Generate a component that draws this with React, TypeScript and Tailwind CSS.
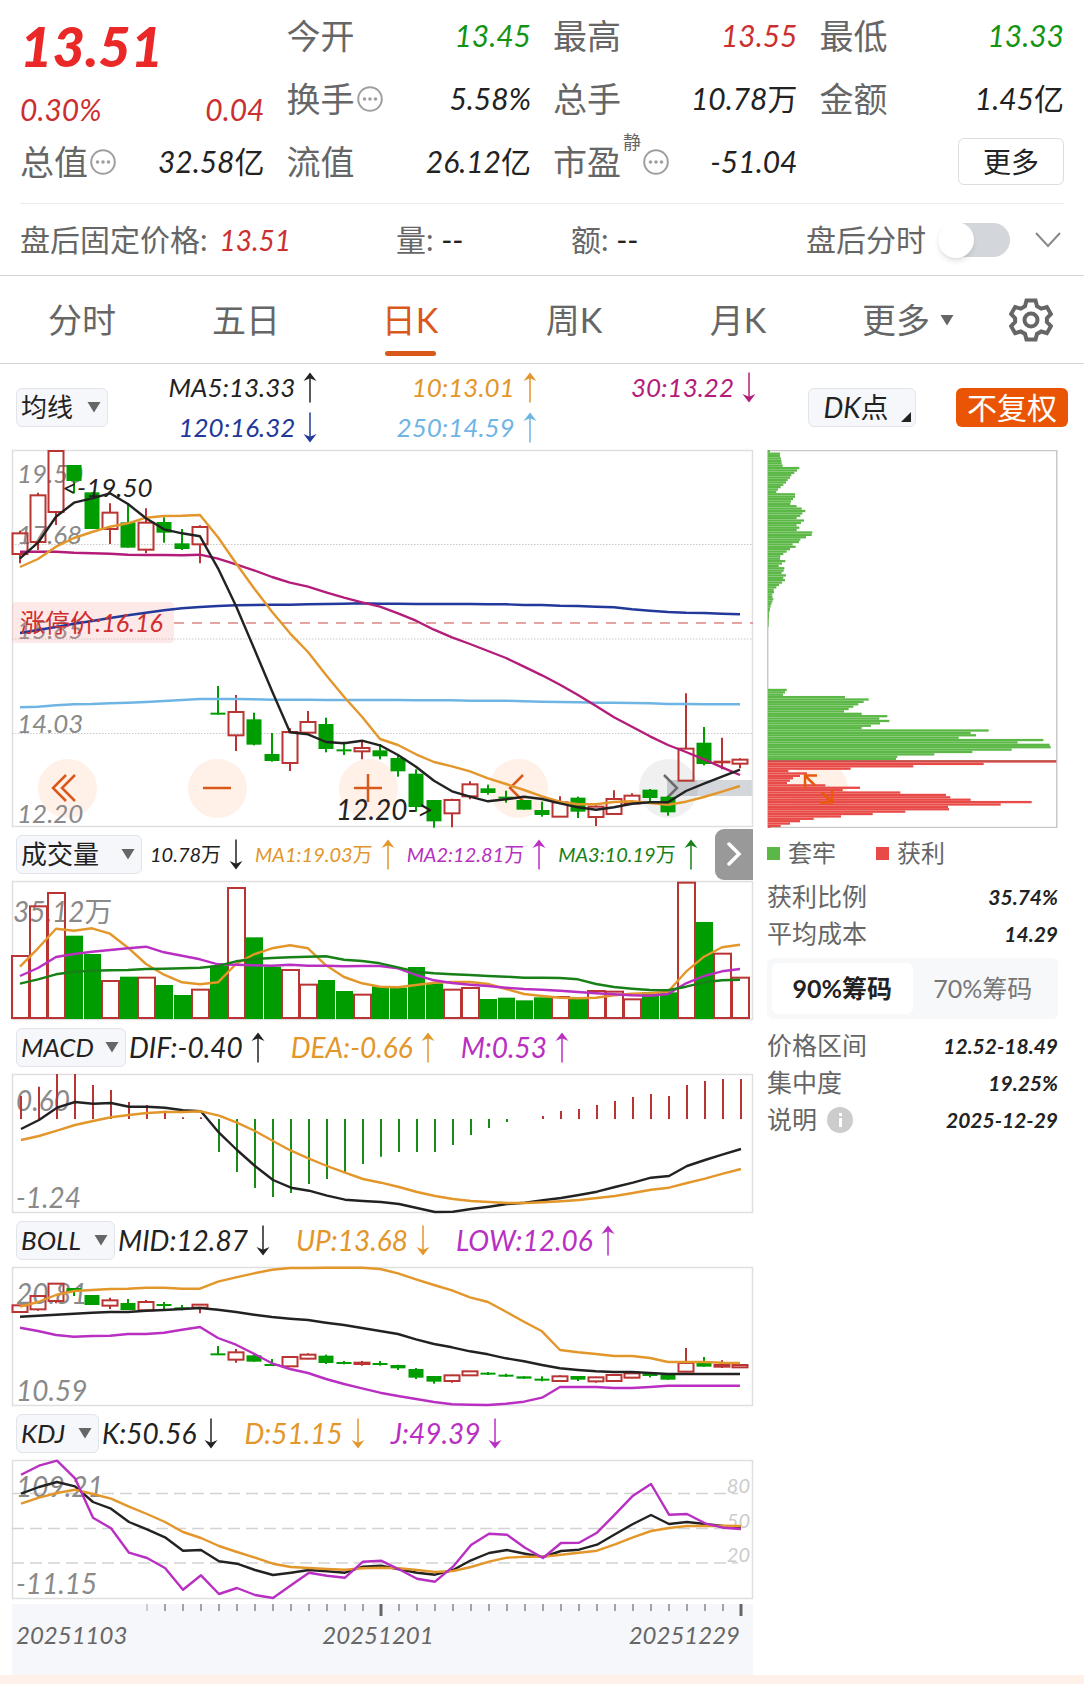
import { useState, type ReactNode } from 'react';
import clsx from 'clsx';

type Candle = [dir: 'r' | 'g', top: number, bottom: number, high?: number, low?: number];

const RED = '#b93432';
const GREEN = '#009d00';
const BLACK = '#222222';
const ORANGE = '#e3962a';
const PURPLE = '#b82fc2';

// Series are stored in thirds of a pixel, one value per trading day
const STEP = 18;
const dayX = (i: number) => 8 + i * STEP;

const candles: Candle[] = [
  ['r', 280, 342, 272, 370], ['r', 166, 306, 158, 330], ['r', 33, 216, 33, 255], ['g', 75, 123, 75, 160],
  ['g', 157, 267], ['r', 218, 267, 190, 312], ['g', 247, 323, 195, 323], ['r', 248, 329, 205, 340],
  ['g', 246, 278, 232, 308], ['g', 310, 327, 267, 330], ['r', 261, 313, 256, 370], ['g', 818, 824, 738, 824],
  ['r', 816, 886, 765, 933], ['g', 838, 914, 818, 916], ['g', 942, 963, 879, 965], ['r', 876, 969, 865, 993],
  ['r', 846, 878, 813, 880], ['g', 852, 927, 833, 937], ['g', 928, 934, 905, 945], ['r', 924, 934, 905, 958],
  ['g', 931, 949, 912, 958], ['g', 954, 994, 948, 1010], ['g', 1001, 1101, 988, 1115], ['g', 1080, 1144, 1080, 1163],
  ['r', 1080, 1120, 1076, 1162], ['r', 1033, 1069, 1024, 1078], ['g', 1045, 1059, 1034, 1064], ['g', 1070, 1074, 1052, 1088],
  ['g', 1080, 1109], ['g', 1110, 1125, 1085, 1130], ['r', 1087, 1130, 1069, 1132], ['g', 1073, 1115, 1070, 1134],
  ['r', 1100, 1131, 1096, 1158], ['r', 1077, 1122, 1051, 1124], ['r', 1067, 1090, 1060, 1092], ['g', 1049, 1074, 1047, 1085],
  ['g', 1070, 1117, 1068, 1127], ['r', 926, 1022, 760, 1024], ['g', 908, 972, 861, 976], ['r', 965, 967, 893, 988],
  ['r', 959, 971, 955, 985],
];

const ma5 = [355, 308, 230, 188, 175, 160, 192, 235, 268, 280, 289, 385, 498, 625, 753, 877, 883, 906, 910, 902, 916, 945, 980, 1022, 1054, 1070, 1084, 1078, 1070, 1077, 1090, 1102, 1109, 1102, 1091, 1087, 1087, 1053, 1031, 1010, 989];
const ma10 = [381, 357, 320, 294, 276, 260, 250, 233, 228, 227, 225, 292, 370, 445, 515, 580, 636, 705, 770, 830, 897, 915, 943, 966, 979, 994, 1015, 1032, 1050, 1069, 1085, 1093, 1093, 1086, 1084, 1089, 1094, 1085, 1071, 1055, 1038];
const ma30 = [335, 335, 335, 338, 340, 341, 344, 345, 345, 346, 344, 356, 373, 391, 411, 428, 440, 457, 473, 487, 500, 520, 542, 569, 592, 612, 633, 654, 680, 706, 734, 765, 798, 832, 860, 889, 915, 936, 958, 982, 1005];
const ma120 = [579, 570, 561, 551, 543, 534, 526, 518, 511, 505, 501, 498, 496, 495, 494, 494, 493, 492, 491, 490, 491, 491, 492, 492, 492, 492, 493, 493, 495, 495, 497, 498, 500, 502, 508, 512, 516, 518, 519, 521, 523];
const ma250 = [802, 800, 796, 793, 792, 790, 788, 786, 783, 780, 777, 777, 777, 778, 779, 779, 779, 780, 780, 780, 780, 780, 781, 781, 781, 782, 782, 782, 784, 785, 786, 787, 788, 788, 789, 790, 792, 792, 793, 793, 793];

const volumes = [405, 256, 216, 347, 402, 480, 470, 470, 495, 525, 506, 437, 201, 352, 440, 447, 491, 480, 513, 521, 499, 503, 441, 490, 506, 501, 537, 533, 541, 532, 528, 535, 510, 512, 535, 517, 517, 185, 306, 398, 470];
const vol1 = [440, 385, 326, 332, 325, 341, 383, 432, 464, 487, 493, 487, 432, 403, 385, 376, 385, 436, 471, 490, 500, 502, 495, 488, 486, 486, 492, 507, 522, 528, 533, 535, 533, 526, 521, 520, 515, 455, 410, 382, 374];
const vol2 = [468, 444, 411, 402, 395, 390, 385, 380, 397, 407, 418, 433, 434, 436, 437, 434, 437, 437, 439, 438, 438, 445, 465, 481, 489, 494, 498, 503, 507, 509, 512, 516, 520, 523, 526, 527, 522, 490, 468, 454, 447];
const vol3 = [491, 478, 463, 455, 452, 451, 450, 447, 446, 445, 443, 438, 424, 417, 414, 412, 410, 409, 419, 423, 430, 442, 455, 460, 463, 465, 468, 470, 473, 473, 474, 478, 492, 501, 506, 510, 511, 500, 487, 481, 479];

const macdBars = [828, 800, 762, 762, 795, 810, 846, 855, 872, 892, 892, 996, 1056, 1104, 1131, 1119, 1092, 1077, 1056, 1032, 1010, 996, 996, 996, 975, 945, 924, 906, 897, 888, 873, 867, 855, 843, 831, 822, 828, 795, 783, 777, 777];
const dif = [927, 900, 863, 846, 851, 849, 860, 860, 863, 871, 874, 938, 990, 1038, 1080, 1103, 1112, 1127, 1139, 1143, 1146, 1152, 1164, 1176, 1175, 1167, 1160, 1152, 1148, 1141, 1134, 1125, 1115, 1101, 1088, 1073, 1068, 1038, 1020, 1003, 987];
const dea = [960, 948, 932, 915, 903, 892, 885, 879, 876, 876, 874, 887, 908, 933, 963, 992, 1016, 1038, 1058, 1077, 1088, 1101, 1116, 1128, 1137, 1143, 1146, 1149, 1149, 1147, 1144, 1140, 1134, 1128, 1119, 1109, 1103, 1089, 1076, 1061, 1047];

const bollCandles: Candle[] = [
  ['r', 286, 306], ['r', 258, 298, 255, 302], ['r', 221, 273, 221, 280], ['g', 234, 244, 234, 258], ['g', 255, 285],
  ['r', 271, 287, 263, 297], ['g', 279, 300, 267, 300], ['r', 276, 301, 270, 303], ['g', 282, 288, 276, 300], ['g', 292, 297, 285, 301],
  ['r', 284, 293, 284, 310], ['g', 430, 435, 408, 435], ['r', 427, 449, 417, 458], ['g', 436, 455, 431, 455], ['g', 462, 467, 447, 467],
  ['r', 441, 469], ['r', 434, 446, 430, 448], ['g', 437, 459, 434, 462], ['g', 456, 461, 453, 463], ['r', 458, 462, 453, 467],
  ['g', 459, 464, 453, 467], ['g', 465, 475, 464, 480], ['g', 477, 503, 474, 507], ['g', 498, 515, 498, 521], ['r', 496, 513, 494, 518],
  ['r', 484, 496], ['g', 488, 492, 486, 495], ['g', 494, 498, 491, 501], ['g', 499, 506], ['g', 506, 510, 499, 514],
  ['r', 499, 513, 496, 514], ['g', 498, 509, 498, 513], ['r', 502, 514, 500, 518], ['r', 495, 513, 492, 514], ['r', 490, 503],
  ['g', 492, 498, 489, 502], ['g', 494, 509], ['r', 459, 485, 414, 487], ['g', 454, 470, 441, 470], ['r', 465, 470, 451, 474],
  ['r', 465, 472],
];
const bollUp = [290, 276, 255, 243, 240, 237, 236, 233, 233, 236, 236, 215, 202, 190, 179, 174, 174, 173, 173, 173, 177, 190, 208, 225, 241, 262, 276, 305, 335, 364, 420, 427, 432, 438, 438, 444, 456, 456, 456, 458, 459];
const bollMid = [320, 317, 314, 311, 308, 306, 306, 302, 300, 297, 294, 299, 306, 314, 321, 326, 330, 338, 345, 354, 363, 372, 388, 402, 412, 424, 433, 445, 454, 465, 475, 480, 484, 486, 486, 489, 492, 492, 492, 492, 492];
const bollLow = [353, 363, 375, 380, 378, 377, 372, 372, 368, 359, 351, 384, 404, 431, 460, 477, 489, 507, 522, 535, 548, 558, 567, 576, 583, 584, 585, 581, 575, 563, 531, 531, 531, 534, 534, 531, 527, 527, 527, 527, 527];

const kLine = [851, 831, 816, 829, 876, 896, 936, 958, 982, 1022, 1020, 1054, 1061, 1080, 1095, 1088, 1080, 1084, 1088, 1070, 1067, 1078, 1088, 1094, 1080, 1051, 1029, 1020, 1031, 1041, 1023, 1019, 1004, 973, 942, 915, 942, 936, 942, 948, 951];
const dLine = [881, 863, 849, 839, 852, 866, 890, 912, 936, 966, 984, 1008, 1026, 1043, 1061, 1071, 1074, 1077, 1079, 1075, 1073, 1075, 1080, 1086, 1083, 1071, 1055, 1043, 1040, 1040, 1034, 1028, 1022, 1003, 982, 963, 954, 948, 948, 947, 948];
const jLine = [794, 767, 752, 805, 923, 955, 1028, 1044, 1074, 1139, 1096, 1152, 1134, 1155, 1164, 1126, 1088, 1097, 1103, 1055, 1052, 1078, 1106, 1115, 1070, 1005, 971, 974, 1013, 1044, 999, 998, 968, 913, 857, 822, 914, 912, 940, 953, 957];

// Chip distribution, top price to bottom price
const upperChips = [
  6, 36, 36, 39, 40, 41, 44, 94, 87, 79, 70, 66, 59, 54, 46, 38, 30, 25, 81, 81, 75, 69, 67, 86, 101, 112, 103, 97, 86, 108,
  99, 86, 94, 86, 133, 131, 114, 97, 93, 74, 83, 66, 56, 46, 37, 36, 52, 42, 32, 49, 47, 41, 54, 46, 51, 42, 33, 25, 17, 18,
  13, 13, 16, 13, 10, 8, 6, 5, 3, 3, 3, 2, 2, 2,
];
const lowerChips = [
  56, 51, 45, 231, 302, 287, 271, 256, 242, 228, 281, 358, 334, 364, 336, 309, 281, 662, 608, 624, 572, 826, 749, 845, 848, 731, 613, 499, 388, 384,
  865, 647, 436, 248, 61, 117, 96, 75, 66, 57, 172, 276, 224, 397, 534, 547, 608, 791, 698, 540, 543, 412, 314, 219, 137, 96, 66, 38, 8,
];
const chips = [
  ...upperChips.map((w, i) => ({ row: i, w, profit: false })),
  ...lowerChips.map((w, i) => ({ row: 100 + i, w, profit: i >= 30 })),
];

function Arrow({ down = false }: { down?: boolean }) {
  return (
    <svg width="14" height="31" viewBox="0 0 14 31" fill="none" stroke="currentColor" className={clsx('shrink-0', down && 'rotate-180')}>
      <path d="M7 30.5V2" strokeWidth="1.5" />
      <path d="M7 0.5 0.5 9 7 6.2 13.5 9Z" fill="currentColor" stroke="none" />
    </svg>
  );
}

function Triangle({ className }: { className?: string }) {
  return (
    <svg width="14" height="12" viewBox="0 0 14 12" fill="#666666" className={className}>
      <path d="M0.5 1h13L7 11.500Z" />
    </svg>
  );
}

function MoreDots() {
  return (
    <svg width="26" height="26" viewBox="0 0 26 26" fill="none" stroke="#9f9f9f" strokeWidth="2">
      <circle cx="13" cy="13" r="11.8" />
      <g fill="#9f9f9f" stroke="none">
        <circle cx="7.500" cy="13" r="1.800" />
        <circle cx="13" cy="13" r="1.800" />
        <circle cx="18.500" cy="13" r="1.800" />
      </g>
    </svg>
  );
}

function Gear() {
  return (
    <svg width="44" height="44" viewBox="0 0 44 44" fill="none" stroke="#666666" strokeWidth="4">
      <path d="M17.500 2.500h9l1.500 5.800 4.200 2.400 5.700-1.700 4 7-4 4.200v3.800l4 4.200-4 7-5.700-1.700-4.200 2.400-1.500 5.600h-9L16 35.900l-4.200-2.400-5.700 1.700-4-7 4-4.200v-3.800l-4-4.200 4-7 5.700 1.700L16 8.300Z" />
      <circle cx="22" cy="22" r="6.500" />
    </svg>
  );
}

function Stat({ label, value, color = 'text-[#222]', info, sup }: { label: string; value: string; color?: string; info?: boolean; sup?: string }) {
  return (
    <div className="flex h-[63px] items-center justify-between">
      <div className="flex items-center gap-0.5 text-[34px] text-[#666]">
        <span>{label}</span>
        {sup && <sup className="top-[-20px] text-[18px] leading-none">{sup}</sup>}
        {info && (
          <button type="button" aria-label={label + '说明'}>
            <MoreDots />
          </button>
        )}
      </div>
      <span className={clsx('text-[30px] italic', color)}>{value}</span>
    </div>
  );
}

function Picker({ value, width, name }: { value: string; width: string; name: string }) {
  return (
    <div className={clsx('relative h-[39px] shrink-0', width)}>
      <select
        aria-label={name}
        defaultValue={value}
        className="block h-full w-full appearance-none rounded-md border border-[#e1e4e9] bg-[#f6f7fa] pl-1 text-[26px] leading-none text-[#222] italic"
      >
        <option>{value}</option>
      </select>
      <Triangle className="pointer-events-none absolute top-[13px] right-[7px]" />
    </div>
  );
}

function Legend({ text, color, down }: { text: string; color: string; down?: boolean }) {
  return (
    <span className={clsx('flex items-center gap-2 whitespace-nowrap', color)}>
      {text}
      <Arrow down={down} />
    </span>
  );
}

function Line({ data, top, color, dx = 0 }: { data: number[]; top: number; color: string; dx?: number }) {
  return (
    <polyline
      points={data.map((v, i) => `${dayX(i) + dx},${((v - top) / 3).toFixed(1)}`).join(' ')}
      fill="none"
      stroke={color}
      strokeWidth="2.400"
      strokeLinejoin="round"
    />
  );
}

function Candles({ data, top }: { data: Candle[]; top: number }) {
  return (
    <>
      {data.map(([dir, a, b, high = a, low = b], i) => {
        const y = (v: number) => (v - top) / 3;
        const x = dayX(i);
        const h = (b - a) / 3;
        if (dir === 'g') {
          return (
            <g key={i} fill={GREEN}>
              <rect x={x - 1} y={y(high)} width="2" height={(low - high) / 3} />
              <rect x={x - 7.5} y={y(a)} width="15" height={Math.max(h, 2)} />
            </g>
          );
        }
        return (
          <g key={i} stroke={RED} strokeWidth="2" fill="none">
            <path d={`M${x} ${y(high)}V${y(a)}M${x} ${y(b)}V${y(low)}`} />
            <rect x={x - 7.5} y={y(a)} width="15" height={Math.max(h, 0.5)} />
          </g>
        );
      })}
    </>
  );
}

function Panel({ height, label, children }: { height: number; label: string; children: ReactNode }) {
  return (
    <svg viewBox={`0 0 741 ${height}`} role="img" aria-label={label} className="pointer-events-none relative block w-full overflow-visible">
      <rect x="0.5" y="0.500" width="740" height={height - 1} fill="none" stroke="#dfdfdf" strokeWidth="1.500" />
      {children}
    </svg>
  );
}

function AxisText({ x, y, children }: { x: number; y: number; children: string }) {
  return (
    <text x={x} y={y} className="fill-[#8a8a8a] text-[28px] italic">
      {children}
    </text>
  );
}

function IndicatorRow({ picker, children }: { picker: ReactNode; children: ReactNode }) {
  return (
    <div className="flex h-[54px] items-center gap-[3px] pl-1">
      {picker}
      <div className="flex gap-[26px] text-[28px] italic">{children}</div>
    </div>
  );
}

function PriceChart() {
  const buttons = [
    { name: '最左', path: 'M28 16 15 29l13 13M37 16 24 29l13 13' },
    { name: '缩小', path: 'M15 29h28' },
    { name: '放大', path: 'M15 29h28M29 15v28' },
    { name: '左移', path: 'M34 16 21 29l13 13' },
    { name: '右移', path: 'M25 16 38 29 25 42', muted: true },
  ];
  return (
    <div className="relative">
      <div className="absolute right-0 bottom-[31px] h-4 w-[86px] bg-[#d3d6da]" />
      <div className="absolute inset-x-0 bottom-[9px] flex justify-between pr-[55px] pl-[26px]">
        {buttons.map((b) => (
          <button
            key={b.name}
            type="button"
            aria-label={b.name}
            className={clsx('size-[59px] rounded-full', b.muted ? 'bg-black/6 text-[#6a6a6a]' : 'bg-[#fff0e8] text-[#d9591a]')}
          >
            <svg viewBox="0 0 59 59" fill="none" stroke="currentColor" strokeWidth="2.500">
              <path d={b.path} />
            </svg>
          </button>
        ))}
      </div>
      <Panel height={377} label="日K线图">
        <g stroke="#c9c9c9" strokeDasharray="1.500 1.500">
          <path d="M0 94.500H741M0 189H741M0 283.500H741" />
        </g>
        <g className="fill-[#8a8a8a] text-[26px] italic">
          <text x="5" y="33">19.50</text>
          <text x="5" y="94">17.68</text>
          <text x="5" y="189">15.85</text>
          <text x="5" y="283">14.03</text>
          <text x="5" y="373">12.20</text>
        </g>
        <Candles data={candles} top={30} />
        <rect x="0" y="152" width="162" height="41" rx="4" fill="#fb9a9a" fillOpacity="0.22" />
        <path d="M162 173H741" stroke="#dc8683" strokeWidth="1.500" strokeDasharray="10 8" />
        <Line data={ma120} top={30} color="#22389a" />
        <Line data={ma250} top={30} color="#6fb5e4" />
        <Line data={ma30} top={30} color="#b31d79" />
        <Line data={ma10} top={30} color={ORANGE} />
        <Line data={ma5} top={30} color={BLACK} />
        <text x="8" y="182" className="fill-[#cf2f2f] text-[25px] italic">涨停价:16.16</text>
        <text x="50" y="47" className="fill-[#222] text-[26px] italic">&lt;-19.50</text>
        <text x="324" y="370" className="fill-[#222] text-[28px] italic">12.20-&gt;</text>
      </Panel>
    </div>
  );
}

function VolumeChart() {
  return (
    <Panel height={139} label="成交量">
      <AxisText x={1} y={41}>35.12万</AxisText>
      {volumes.map((v, i) => {
        const y = (v - 183) / 3;
        return candles[i][0] === 'g' ? (
          <rect key={i} x={dayX(i) - 8} y={y} width="17" height={138 - y} fill={GREEN} />
        ) : (
          <rect key={i} x={dayX(i) - 8} y={y + 1} width="17" height={136 - y} fill="none" stroke={RED} strokeWidth="2" />
        );
      })}
      <Line data={vol1} top={183} color={ORANGE} />
      <Line data={vol2} top={183} color={PURPLE} />
      <Line data={vol3} top={183} color="#178017" />
    </Panel>
  );
}

function MacdChart() {
  return (
    <Panel height={139} label="MACD">
      <AxisText x={4} y={37}>0.60</AxisText>
      <AxisText x={4} y={134}>-1.24</AxisText>
      {macdBars.map((v, i) => (
        <path key={i} d={`M${dayX(i) + 1} 45V${(v - 762) / 3}`} stroke={v < 897 ? RED : '#178c17'} strokeWidth="2" />
      ))}
      <Line data={dif} top={762} color={BLACK} dx={1} />
      <Line data={dea} top={762} color={ORANGE} dx={1} />
    </Panel>
  );
}

function BollChart() {
  return (
    <Panel height={139} label="BOLL">
      <AxisText x={4} y={37}>20.81</AxisText>
      <AxisText x={4} y={134}>10.59</AxisText>
      <Candles data={bollCandles} top={171} />
      <Line data={bollUp} top={171} color={ORANGE} />
      <Line data={bollMid} top={171} color={BLACK} />
      <Line data={bollLow} top={171} color={PURPLE} />
    </Panel>
  );
}

function KdjChart() {
  return (
    <Panel height={139} label="KDJ">
      <path d="M0 33.500H726M0 68.500H726M0 103H726" stroke="#d3d3d3" strokeWidth="1.300" strokeDasharray="12 6" />
      <AxisText x={4} y={37}>109.21</AxisText>
      <AxisText x={4} y={134}>-11.15</AxisText>
      <g textAnchor="end" className="fill-[#cccccc] text-[20px] italic">
        <text x="738" y="33">80</text>
        <text x="738" y="68">50</text>
        <text x="738" y="102">20</text>
      </g>
      <Line data={kLine} top={750} color={BLACK} dx={1} />
      <Line data={dLine} top={750} color={ORANGE} dx={1} />
      <Line data={jLine} top={750} color={PURPLE} dx={1} />
    </Panel>
  );
}

function DateAxis() {
  const ticks = Array.from({ length: 34 }, (_, i) => i + 7);
  return (
    <div className="mt-[5px] h-[71px] bg-[#f6f7fa]">
      <svg viewBox="0 0 741 14" className="block w-full">
        {ticks.map((i) => {
          const major = i === 20 || i === 40;
          return (
            <path
              key={i}
              d={`M${dayX(i) + 1} 0V${major ? 12 : 7}`}
              stroke={major ? '#666666' : '#a3a3a3'}
              strokeWidth={major ? 3 : 2}
              strokeOpacity={i === 7 ? 0.5 : 1}
            />
          );
        })}
      </svg>
      <div className="flex justify-between pr-[13px] pl-1 text-[24px] leading-[34px] text-[#666] italic">
        <span>20251103</span>
        <span>20251201</span>
        <span>20251229</span>
      </div>
    </div>
  );
}

function ChipChart() {
  return (
    <div className="relative">
      <button type="button" aria-label="展开" className="absolute bottom-[9px] left-[22px] size-[59px] rounded-full bg-[#fff0e8]" />
      <svg viewBox="0 0 291 378" role="img" aria-label="筹码分布" className="pointer-events-none relative block w-full">
        <rect x="0.750" y="0.500" width="289" height="377" fill="none" stroke="#c8c8c8" strokeWidth="1.500" />
        {chips.map((c) => (
          <rect key={c.row} x="1" y={0.2 + c.row * 2.386} width={c.w / 3} height="2.300" fill={c.profit ? '#e84a47' : '#5bb846'} />
        ))}
        <path d="M1 311H289" stroke="#b9524c" strokeWidth="1.500" />
        <path d="M38 338V325.500H50M39 326.500 48 335.500M65 340V352.500H53M64 351.500 55 342.500" fill="none" stroke="#e8590c" strokeWidth="2.500" />
      </svg>
    </div>
  );
}

function ChipRow({ label, value, info }: { label: string; value: string; info?: boolean }) {
  return (
    <div className="flex h-[37px] items-center justify-between">
      <dt className="flex items-center gap-2.5 text-[25px] text-[#666]">
        {label}
        {info && (
          <svg width="26" height="26" viewBox="0 0 26 26" fill="#cccccc">
            <circle cx="13" cy="13" r="13" />
            <path d="M12 11h3v9h-3zM12 6h3v3h-3z" fill="#ffffff" />
          </svg>
        )}
      </dt>
      <dd className="text-[21px] font-bold text-[#222] italic">{value}</dd>
    </div>
  );
}

export default function App() {
  const [tab, setTab] = useState('日K');
  const [range, setRange] = useState('90%筹码');
  const [afterHours, setAfterHours] = useState(false);

  return (
    <div className="min-h-screen bg-white font-['Lato','Noto_Sans_CJK_SC',sans-serif] text-[#222] [font-synthesis:none]">
      {/* Quote summary */}
      <header className="px-5 pt-1">
        <div className="grid grid-cols-4 gap-x-[22px] border-b border-[#ebebeb] pb-2.5">
          <div>
            <div className="flex h-[84px] items-center text-[56px] leading-none font-black text-[#ea2828] italic">13.51</div>
            <div className="flex h-[42px] items-center justify-between text-[30px] text-[#cb3030] italic">
              <span>0.30%</span>
              <span>0.04</span>
            </div>
            <Stat label="总值" value="32.58亿" info />
          </div>
          <div>
            <Stat label="今开" value="13.45" color="text-[#149414]" />
            <Stat label="换手" value="5.58%" info />
            <Stat label="流值" value="26.12亿" />
          </div>
          <div>
            <Stat label="最高" value="13.55" color="text-[#cb3030]" />
            <Stat label="总手" value="10.78万" />
            <Stat label="市盈" value="-51.04" sup="静" info />
          </div>
          <div>
            <Stat label="最低" value="13.33" color="text-[#149414]" />
            <Stat label="金额" value="1.45亿" />
            <div className="flex h-[63px] items-center justify-end">
              <button type="button" className="h-[47px] w-[106px] rounded-md border border-[#dedede] text-[28px] leading-none">
                更多
              </button>
            </div>
          </div>
        </div>

        <div className="flex h-[71px] items-center text-[30px] text-[#666]">
          <div className="flex w-[376px] items-center gap-3">
            盘后固定价格: <span className="text-[28px] text-[#cb3030] italic">13.51</span>
          </div>
          <div className="w-[175px]">
            量: <span className="text-[#222]">--</span>
          </div>
          <div>
            额: <span className="text-[#222]">--</span>
          </div>
          <label className="ml-auto flex items-center gap-3">
            盘后分时
            <input
              type="checkbox"
              role="switch"
              checked={afterHours}
              onChange={(e) => setAfterHours(e.target.checked)}
              className="relative h-[34px] w-[72px] appearance-none rounded-full bg-[#d3d6da] before:absolute before:top-[-1px] before:left-0 before:size-9 before:rounded-full before:bg-white before:shadow-md checked:bg-[#e8590c] checked:before:left-9"
            />
          </label>
          <button type="button" aria-label="展开" className="mr-0.5 ml-6">
            <svg width="28" height="18" viewBox="0 0 28 18" fill="none" stroke="#8a8a8a" strokeWidth="2">
              <path d="M2 2 14 15 26 2" />
            </svg>
          </button>
        </div>
      </header>

      {/* Period tabs */}
      <nav className="flex h-[89px] items-center border-y border-[#d6d6d6] pr-[31px]">
        <div className="grid h-full flex-1 grid-cols-6 pr-[25px]">
          {['分时', '五日', '日K', '周K', '月K', '更多'].map((name) => (
            <button
              key={name}
              type="button"
              onClick={() => setTab(name)}
              className={clsx(
                'relative flex items-center justify-center gap-2.5 text-[34px]',
                tab === name ? 'text-[#d9591a]' : 'text-[#666]',
                name === '更多' && 'pl-3',
              )}
            >
              {name}
              {name === '更多' && <Triangle />}
              {tab === name && <span className="absolute bottom-[7px] h-[5px] w-[51px] rounded-full bg-[#d9591a]" />}
            </button>
          ))}
        </div>
        <button type="button" aria-label="设置">
          <Gear />
        </button>
      </nav>

      {/* Moving averages */}
      <div className="flex h-[86px] items-center px-4">
        <Picker name="主图指标" value="均线" width="w-[92px]" />
        <div className="grid flex-1 grid-cols-3 gap-x-2.5 text-[26px] leading-[40px] italic">
          <div className="flex justify-end"><Legend text="MA5:13.33" color="text-[#222]" /></div>
          <div className="flex justify-end"><Legend text="10:13.01" color="text-[#e3962a]" /></div>
          <div className="flex justify-end"><Legend text="30:13.22" color="text-[#b31d79]" down /></div>
          <div className="flex justify-end"><Legend text="120:16.32" color="text-[#22389a]" down /></div>
          <div className="flex justify-end"><Legend text="250:14.59" color="text-[#6fb5e4]" /></div>
        </div>
        <button type="button" className="relative ml-[52px] h-[39px] w-[108px] rounded-md border border-[#e1e4e9] bg-[#f6f7fa] pr-3 text-[28px] leading-none italic">
          DK点
          <svg width="10" height="10" viewBox="0 0 10 10" fill="#222222" className="absolute right-1 bottom-1">
            <path d="M10 0V10H0Z" />
          </svg>
        </button>
        <button type="button" className="ml-10 h-[39px] w-[112px] rounded-md bg-[#e95504] text-[30px] leading-none text-white">
          不复权
        </button>
      </div>

      <main className="grid grid-cols-[minmax(0,1fr)_291px] gap-[14px] pr-[26px] pl-3">
        <section>
          <PriceChart />
          <div className="flex h-[54px] items-center gap-2 pl-1 text-[20px] italic">
            <Picker name="副图指标一" value="成交量" width="w-[126px]" />
            <div className="flex gap-3">
              <Legend text="10.78万" color="text-[#222]" down />
              <Legend text="MA1:19.03万" color="text-[#e3962a]" />
              <Legend text="MA2:12.81万" color="text-[#b82fc2]" />
              <Legend text="MA3:10.19万" color="text-[#178017]" />
            </div>
            <button type="button" aria-label="下一组" className="ml-auto flex h-[51px] w-[38px] items-center justify-center rounded-l-[9px] bg-[#999]">
              <svg width="16" height="24" viewBox="0 0 16 24" fill="none" stroke="#ffffff" strokeWidth="3.500" strokeLinecap="round">
                <path d="M3 2 13 12 3 22" />
              </svg>
            </button>
          </div>
          <VolumeChart />
          <IndicatorRow picker={<Picker name="副图指标二" value="MACD" width="w-[110px]" />}>
            <Legend text="DIF:-0.40" color="text-[#222]" />
            <Legend text="DEA:-0.66" color="text-[#e3962a]" />
            <Legend text="M:0.53" color="text-[#b82fc2]" />
          </IndicatorRow>
          <MacdChart />
          <IndicatorRow picker={<Picker name="副图指标三" value="BOLL" width="w-[99px]" />}>
            <Legend text="MID:12.87" color="text-[#222]" down />
            <Legend text="UP:13.68" color="text-[#e3962a]" down />
            <Legend text="LOW:12.06" color="text-[#b82fc2]" />
          </IndicatorRow>
          <BollChart />
          <IndicatorRow picker={<Picker name="副图指标四" value="KDJ" width="w-[83px]" />}>
            <Legend text="K:50.56" color="text-[#222]" down />
            <Legend text="D:51.15" color="text-[#e3962a]" down />
            <Legend text="J:49.39" color="text-[#b82fc2]" down />
          </IndicatorRow>
          <KdjChart />
          <DateAxis />
        </section>

        {/* Chip distribution */}
        <aside>
          <ChipChart />
          <div className="flex h-[50px] items-center gap-10 text-[24px] text-[#666]">
            <span className="flex items-center gap-2"><i className="size-[13px] bg-[#5bb846]" />套牢</span>
            <span className="flex items-center gap-2"><i className="size-[13px] bg-[#e84a47]" />获利</span>
          </div>
          <dl>
            <ChipRow label="获利比例" value="35.74%" />
            <ChipRow label="平均成本" value="14.29" />
          </dl>
          <div className="mt-1.5 mb-2 grid h-[61px] grid-cols-2 rounded-md bg-[#f7f8fa] p-[5px]">
            {['90%筹码', '70%筹码'].map((name) => (
              <button
                key={name}
                type="button"
                onClick={() => setRange(name)}
                className={clsx('rounded-md text-[25px] leading-none', range === name ? 'bg-white font-bold text-[#222]' : 'text-[#777]')}
              >
                {name}
              </button>
            ))}
          </div>
          <dl>
            <ChipRow label="价格区间" value="12.52-18.49" />
            <ChipRow label="集中度" value="19.25%" />
            <ChipRow label="说明" value="2025-12-29" info />
          </dl>
        </aside>
      </main>
      <div className="h-[9px] bg-[#fff1ea]" />
    </div>
  );
}
